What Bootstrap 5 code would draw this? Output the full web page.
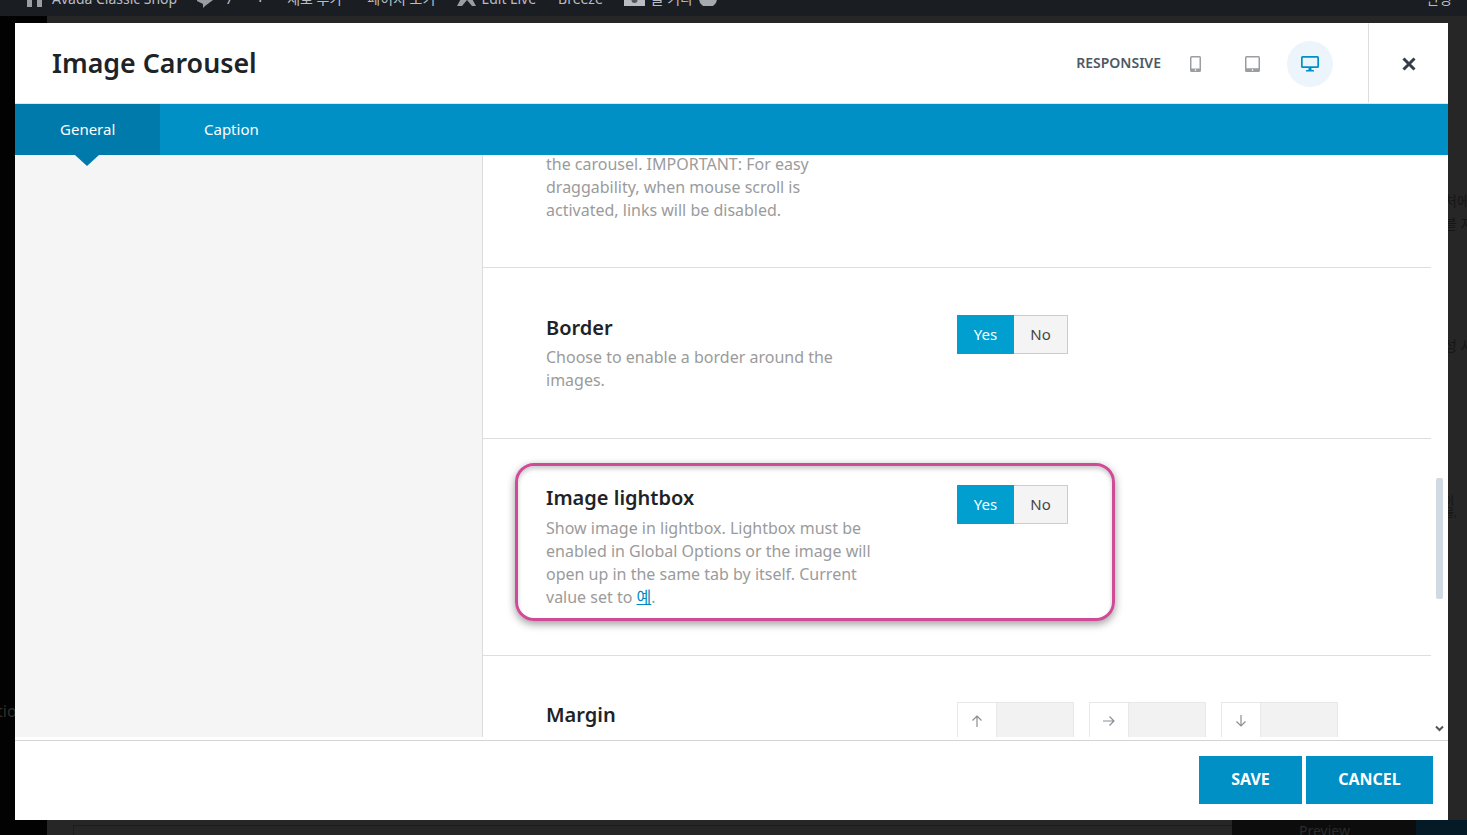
<!DOCTYPE html>
<html lang="en">
<head>
<meta charset="utf-8">
<title>Image Carousel</title>
<link href="https://cdn.jsdelivr.net/npm/bootstrap@5.3.0/dist/css/bootstrap.min.css" rel="stylesheet">
<style>
html,body{height:835px;overflow:hidden}
body{background:#262626;font-family:"Noto Sans","Noto Sans CJK KR",sans-serif;position:relative;color:#1d2327}
.bg-page{height:835px;overflow:hidden}
.wp-bar{height:16px;background:#1a1e22;color:#b9bdc2;font-size:14px;overflow:hidden;flex:none}
.wp-bar-in{margin-top:-16px;height:29px;white-space:nowrap}
.wp-bar-right{margin-left:auto;padding-right:15px}
.wp-ic{display:block;flex:none}
.w-home{margin-left:26px}.w-site{margin-left:9px}.w-cmt{margin-left:20px}.w-num{margin-left:12px}
.w-plus{margin-left:23px;font-weight:700}.w-new{margin-left:23px}.w-view{margin-left:25px}
.w-x{margin-left:22px}.w-edit{margin-left:5px}.w-brz{margin-left:22px}.w-cam{margin-left:21px}.w-msg{margin-left:6px}.w-hlp{margin-left:6px}
.bg-mid{min-height:0}
.bg-left{width:47px;background:#020202;color:#2f2f2f;font-size:16px;padding-top:683px;overflow:hidden;white-space:nowrap;text-indent:-3px;flex:none}
.bg-right{width:19px;color:#151515;font-size:14px;overflow:hidden;white-space:nowrap;padding-top:173px;line-height:23px;text-indent:-4px}
.bg-right-gap{margin-top:99px}
.bg-right-gap2{margin-top:138px}
.bg-tight{font-size:11px;line-height:12px}
.bg-bottom{height:15px;flex:none;overflow:hidden;font-size:14px;color:#2b2b2b}
.bg-b1{width:47px;background:#020202}
.bg-b2{width:1185px;padding:5px 0 0 26px}
.bg-b2-in{height:100%;border-top:1px solid #1d1d1d;border-left:1px solid #1d1d1d}
.bg-b3{width:184px;background:#0c0c0c;padding-left:67px;line-height:22px}
.bg-b4{background:#041a27}
.dlg{position:absolute;left:15px;top:23px;width:1433px;height:797px;background:#fff;display:flex;flex-direction:column;overflow:hidden}
.dlg-head{height:81px;flex:none;border-bottom:1px solid #e2e4e7}
.dlg-title{font-size:26.8px;font-weight:600;color:#1d2327;margin:1px 0 0 37px;line-height:1}
.resp-lab{font-size:14px;font-weight:600;color:#4e5965;margin-right:11px;margin-top:-1px}
.dev{width:46px;height:46px;border-radius:50%;margin-left:11px;margin-top:2px}
.dev-on{background:#edf5fc;margin-left:12px}
.dev-first{margin-left:0}
.dlg-close{width:80px;height:100%;margin-left:35px;padding:2px 0 0 1px;border-left:1px solid #dcdcdc}
.dlg-tabs{height:51px;flex:none;background:#0090c6}
.tab-item{width:145px;height:51px;color:#fff;font-size:15px;display:flex;align-items:center;justify-content:flex-start;padding:0 0 0 44px;position:relative}
.tab-item:hover,.tab-item:focus{color:#fff}
.tab-on{background:#0079ab;padding-left:45px}
.tab-on::after{content:"";position:absolute;left:60px;top:51px;border:12.5px solid transparent;border-top:11px solid #0079ab;border-bottom:0}
.dlg-body{height:582px;flex:none;min-height:0}
.dlg-side{width:468px;background:#f5f5f5;border-right:1px solid #dcdcdc;flex:none}
.dlg-main{flex:1;position:relative;overflow:hidden}
.opt{width:948px;border-bottom:1px solid #dedede;padding-left:63px;position:relative}
.opt-first{height:115px}
.opt-first .opt-t{margin-top:-2px}
.opt-b{height:171px;padding-top:46px}
.opt-c{height:217px;padding-top:45px}
.opt-d{border-bottom:0;height:81px;padding-top:45px}
.opt-l{width:411px;flex:none}
.opt-h{font-size:20px;font-weight:600;line-height:27px;color:#1d2327;margin:0 0 5px}
.opt-c .opt-h{margin-bottom:6px}
.opt-t{width:327px;font-size:16px;line-height:23px;color:#9b9b9b;margin:0}
.opt-t a{color:#0088bc}
.yn{height:39px;margin-top:1px}
.yn .btn{border-radius:0;height:39px;font-size:15px;padding:0;line-height:37px}
.yn-y{width:57px;background:#009fd0;border:1px solid #009fd0;color:#fff}
.yn .btn.yn-n.yn-n{width:54px;margin-left:0;background:#f4f4f4;border:1px solid #ccc;border-left:0;color:#444}
.yn-y:hover,.yn-y:focus{background:#009fd0;border-color:#009fd0;color:#fff}
.opt-d .opt-r{gap:15px;margin-top:1px}
.mrg{width:117px;height:36px;border:1px solid #e8e8e8;border-bottom:0}
.mrg-i{width:39px;border-right:1px solid #e8e8e8;background:#fff}
.mrg-v{flex:1;background:#f3f2f3}
.hilite{position:absolute;left:32px;top:24px;width:600px;height:158px;border:3px solid #cf4b97;border-radius:19px;box-shadow:0 3px 8px rgba(0,0,0,.4),inset 0 3px 4px rgba(0,0,0,.2);pointer-events:none}
.sc-thumb{position:absolute;right:5px;top:323px;width:7px;height:121px;background:#d0dae2;border-radius:2px}
.sc-down{position:absolute;right:4px;top:570px;display:block}
.dlg-foot{flex:1;border-top:1px solid #d4d4d4;margin-top:3px;padding:15px 15px 0 0;gap:4px}
.act{height:48px;background:#0090c6;border:0;border-radius:0;color:#fff;font-size:16px;font-weight:700;padding:0 0 2px}
.act:hover,.act:focus{background:#0090c6;color:#fff}
.act-s{width:103px}
.act-c{width:127px}
</style>
</head>
<body>
<div class="bg-page d-flex flex-column">
  <div class="wp-bar">
    <div class="wp-bar-in d-flex align-items-center">
      <svg class="wp-ic w-home" width="17" height="16" viewBox="0 0 17 16"><path d="M1 0h15v16H1z" fill="#9a9ea3"/><path d="M6 9h5v7H6z" fill="#1a1e22"/></svg>
      <span class="w-site">Avada Classic Shop</span>
      <svg class="wp-ic w-cmt" width="16" height="22" viewBox="0 0 16 22"><path d="M0 12h16l-8 6-2 2v-4L0 13z" fill="#9a9ea3"/></svg>
      <span class="w-num">7</span>
      <span class="w-plus">+</span>
      <span class="w-new">새로 추가</span>
      <span class="w-view">페이지 보기</span>
      <svg class="wp-ic w-x" width="19" height="15" viewBox="0 0 19 15"><path d="M0 15 6 4h7l6 11h-4l-5-6-5 6z" fill="#9a9ea3"/></svg>
      <span class="w-edit">Edit Live</span>
      <span class="w-brz">Breeze</span>
      <svg class="wp-ic w-cam" width="21" height="14" viewBox="0 0 21 14"><path d="M0 0h21v14H0z" fill="#b9bdc2"/><circle cx="10.500" cy="8" r="3" fill="#55595e"/></svg>
      <span class="w-msg">글 기다</span>
      <svg class="wp-ic w-hlp" width="18" height="14" viewBox="0 0 18 14"><circle cx="9" cy="6.500" r="9" fill="#a7aaad"/></svg>
      <span class="wp-bar-right">안녕</span>
    </div>
  </div>
  <div class="bg-mid d-flex flex-grow-1">
    <div class="bg-left">tion</div>
    <div class="flex-grow-1"></div>
    <div class="bg-right">
      <div>처에</div><div>블 저</div>
      <div class="bg-right-gap">성 사</div>
      <div class="bg-right-gap2 bg-tight">이</div><div class="bg-tight">을,</div>
    </div>
  </div>
  <div class="bg-bottom d-flex">
    <div class="bg-b1"></div><div class="bg-b2"><div class="bg-b2-in"></div></div><div class="bg-b3">Preview</div><div class="bg-b4 flex-grow-1"></div>
  </div>
</div>

<div class="dlg">
  <header class="dlg-head d-flex align-items-center">
    <h1 class="dlg-title">Image Carousel</h1>
    <div class="d-flex align-items-center ms-auto h-100">
      <span class="resp-lab">RESPONSIVE</span>
      <span class="dev dev-first d-flex align-items-center justify-content-center">
        <svg width="11" height="16" viewBox="0 0 11 16"><path fill="#9a9ea3" fill-rule="evenodd" d="M1.500 0h8A1.500 1.500 0 0 1 11 1.500v13A1.500 1.500 0 0 1 9.500 16h-8A1.500 1.500 0 0 1 0 14.500v-13A1.500 1.500 0 0 1 1.500 0zM1.500 1.500v11h8v-11zM5.500 13.300a.8.8 0 1 0 0 1.600.8.8 0 0 0 0-1.600z"/></svg>
      </span>
      <span class="dev d-flex align-items-center justify-content-center">
        <svg width="15" height="16" viewBox="0 0 15 16"><path fill="#9a9ea3" fill-rule="evenodd" d="M1.500 0h12A1.500 1.500 0 0 1 15 1.500v13a1.500 1.500 0 0 1-1.500 1.500h-12A1.500 1.500 0 0 1 0 14.500v-13A1.500 1.500 0 0 1 1.500 0zM1.500 1.500v10.800h12V1.500zM7.500 13.300a.8.8 0 1 0 0 1.600.8.8 0 0 0 0-1.600z"/></svg>
      </span>
      <span class="dev dev-on d-flex align-items-center justify-content-center">
        <svg width="18" height="16" viewBox="0 0 18 16"><path fill="#0090c6" fill-rule="evenodd" d="M1.500 0h15A1.500 1.500 0 0 1 18 1.500v9a1.500 1.500 0 0 1-1.500 1.500h-15A1.500 1.500 0 0 1 0 10.500v-9A1.500 1.500 0 0 1 1.500 0zM1.700 1.700v8.600h14.600V1.700zM7.500 12h3v2h2.500v1.500H5V14h2.500z"/></svg>
      </span>
      <button type="button" class="btn dlg-close d-flex align-items-center justify-content-center rounded-0" aria-label="Close">
        <svg width="14" height="14" viewBox="0 0 14 14"><path d="M1.500 1.500l11 11M12.500 1.500l-11 11" stroke="#333e4a" stroke-width="3" fill="none"/></svg>
      </button>
    </div>
  </header>
  <nav class="dlg-tabs nav">
    <a class="nav-link tab-item tab-on" href="#">General</a>
    <a class="nav-link tab-item" href="#">Caption</a>
  </nav>
  <div class="dlg-body d-flex">
    <aside class="dlg-side"></aside>
    <main class="dlg-main">
      <section class="opt opt-first">
        <p class="opt-t">the carousel. IMPORTANT: For easy draggability, when mouse scroll is activated, links will be disabled.</p>
      </section>
      <section class="opt opt-b d-flex">
        <div class="opt-l">
          <h2 class="opt-h">Border</h2>
          <p class="opt-t">Choose to enable a border around the images.</p>
        </div>
        <div class="opt-r"><div class="btn-group yn"><button type="button" class="btn yn-y">Yes</button><button type="button" class="btn yn-n">No</button></div></div>
      </section>
      <section class="opt opt-c d-flex">
        <div class="opt-l">
          <h2 class="opt-h">Image lightbox</h2>
          <p class="opt-t">Show image in lightbox. Lightbox must be enabled in Global Options or the image will open up in the same tab by itself. Current value set to <a href="#">예</a>.</p>
        </div>
        <div class="opt-r"><div class="btn-group yn"><button type="button" class="btn yn-y">Yes</button><button type="button" class="btn yn-n">No</button></div></div>
        <div class="hilite"></div>
      </section>
      <section class="opt opt-d d-flex">
        <div class="opt-l"><h2 class="opt-h">Margin</h2></div>
        <div class="opt-r d-flex">
          <div class="mrg d-flex"><div class="mrg-i d-flex align-items-center justify-content-center"><svg width="12" height="12" viewBox="0 0 12 12"><path d="M6 12V1M1.500 5.500 6 1l4.500 4.500" stroke="#8a8f94" fill="none" stroke-width="1.200"/></svg></div><div class="mrg-v"></div></div>
          <div class="mrg d-flex"><div class="mrg-i d-flex align-items-center justify-content-center"><svg width="12" height="12" viewBox="0 0 12 12"><path d="M0 6h11M6.500 1.500 11 6l-4.500 4.500" stroke="#8a8f94" fill="none" stroke-width="1.200"/></svg></div><div class="mrg-v"></div></div>
          <div class="mrg d-flex"><div class="mrg-i d-flex align-items-center justify-content-center"><svg width="12" height="12" viewBox="0 0 12 12"><path d="M6 0v11M1.500 6.500 6 11l4.500-4.500" stroke="#8a8f94" fill="none" stroke-width="1.200"/></svg></div><div class="mrg-v"></div></div>
        </div>
      </section>
      <div class="sc-thumb"></div>
      <svg class="sc-down" width="9" height="7" viewBox="0 0 9 7"><path d="M1 1.500 4.500 5 8 1.500" stroke="#555" stroke-width="2" fill="none"/></svg>
    </main>
  </div>
  <footer class="dlg-foot d-flex justify-content-end align-items-start">
    <button type="button" class="btn act act-s">SAVE</button>
    <button type="button" class="btn act act-c">CANCEL</button>
  </footer>
</div>
<script src="https://cdn.jsdelivr.net/npm/bootstrap@5.3.0/dist/js/bootstrap.bundle.min.js"></script>
</body>
</html>
